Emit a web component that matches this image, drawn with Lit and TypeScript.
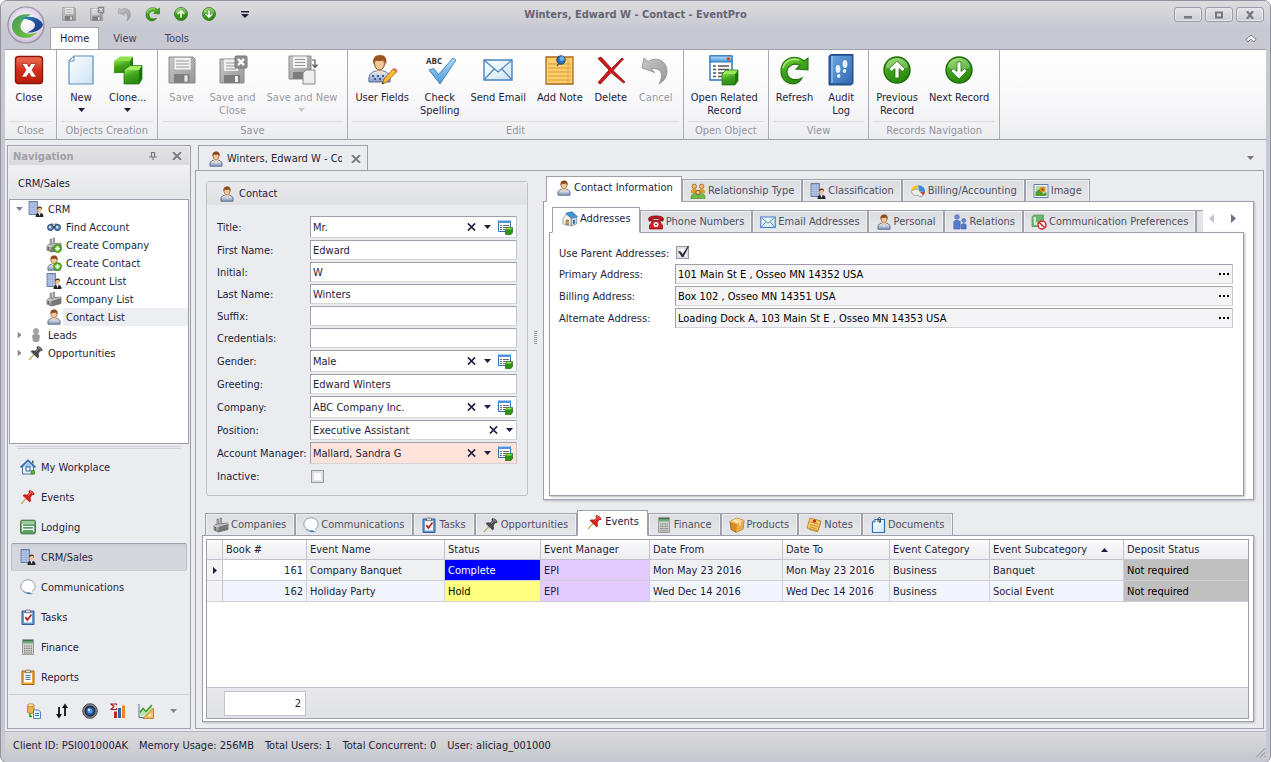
import { LitElement, html, svg, css, TemplateResult, SVGTemplateResult } from "lit";
import { customElement, state } from "lit/decorators.js";
import { classMap } from "lit/directives/class-map.js";

/* ---------- icon artwork ---------- */

const person = svg`
  <path d="M2 15.200c-.6-3.400.6-5.200 3.200-6L8 11l2.800-1.800c2.600.8 3.800 2.600 3.200 6z" fill="url(#shirt)" stroke="#566a86" stroke-width=".9"/>
  <path d="M5.600 9l2.400 4 2.400-4z" fill="#f8d8b0"/>
  <ellipse cx="8" cy="5.300" rx="2.800" ry="3.700" fill="#f3c699" stroke="#8a5428" stroke-width=".6"/>
  <path d="M4.500 6C3.800 2 5.600.4 8.200.4S12.300 2.200 11.500 6c-.4-1.500-.8-2.200-1.500-2.600-1.600.6-3 .6-4.300.2-.6.500-.8 1.200-1.200 2.400z" fill="#8b4a1d"/>`;

const plus = svg`
  <circle cx="11.500" cy="11.500" r="4" fill="#4fb51b" stroke="#2c7f0a" stroke-width=".6"/>
  <path d="M11.500 9v5M9 11.500h5" stroke="#fff" stroke-width="1.700"/>`;

const factory = svg`
  <path d="M1 8.500l3-1.500 11-1v6.500L5.500 15 1 13z" fill="url(#steel)" stroke="#5a5a5a" stroke-width=".7"/>
  <path d="M5.500 9v6l9.500-2.500V6z" fill="#777"/>
  <path d="M1 8.500L5.500 9.500 15 6.500" stroke="#ddd" fill="none" stroke-width=".8"/>
  <path d="M4 7V2h1.500v5M7 6.700V1h1.500v5.500" fill="#aaa" stroke="#666" stroke-width=".5"/>
  <path d="M2 10.500l1 .3M2 12l1 .3" stroke="#333" stroke-width=".9"/>`;

const building = svg`
  <path d="M1 .5h8.500v13H1z" fill="#8ea3cf" stroke="#51699d" stroke-width=".8"/>
  <path d="M3 1v12M5.200 1v12M7.400 1v12M1 3h8.500M1 5.200h8.500M1 7.400h8.500M1 9.600h8.500M1 11.800h8.500" stroke="#c3d0ec" stroke-width=".7"/>
  <path d="M7.500 16c0-3 1.400-4.200 4-4.200s4 1.200 4 4.200z" fill="#25252b"/>
  <path d="M10.300 11.800h2.400L11.500 15z" fill="#fff"/>
  <ellipse cx="11.500" cy="8.800" rx="2.100" ry="2.600" fill="#f3c28c"/>
  <path d="M9 9c-.3-2.600.7-3.500 2.600-3.500S14.400 6.500 14 9c-.5-1.500-1-1.900-1.900-1.900-.9 0-2.200 0-3.100 1.900z" fill="#5d3517"/>`;

const pin = (a: string, b: string) => svg`
  <path d="M1 15l5.200-5.600" stroke="#c9a45a" stroke-width="1.200"/>
  <path d="M3 6.500c1.600-1 3-.8 4-.2L9.500 4l-.6-2C10.500.8 14.500 3.500 14 5.500l-2.200.3L10 9c.8 1.500.7 2.700-.2 4z" fill="${a}" stroke="${b}" stroke-width=".7"/>
  <path d="M8.200 6.500L10.500 4.300M10 2.500c1.200.3 2.200 1.100 2.800 2.200" stroke="#fff" stroke-width=".8" opacity=".6" fill="none"/>`;

const disk = svg`
  <path d="M3 3h24l2 2v24H3z" fill="url(#grey)" stroke="#8a8a8a"/>
  <path d="M8 3.500h17V16H8z" fill="#f2f2f2" stroke="#a8a8a8" stroke-width=".8"/>
  <path d="M10 7h13M10 10h13M10 13h13" stroke="#999" stroke-width="1.200"/>
  <path d="M8 20h16v9H8z" fill="#8c8c8c"/><path d="M18 21h4v7h-4z" fill="#e8e8e8" stroke="#666" stroke-width=".6"/>
  <path d="M8 20h10v9H8z" fill="#777" opacity=".6"/>`;

const sheet = svg`
  <path d="M9 2h19v28H4V7z" fill="url(#paper)" stroke="#5a8fbd" stroke-width="1.200"/>
  <path d="M9 2v5H4z" fill="#fff" stroke="#5a8fbd"/>`;

const ball = (arrow: string) => svg`
  <circle cx="16" cy="16" r="13" fill="url(#green)" stroke="#1f6a08" stroke-width="1.400"/>
  <path d="M5 13C6 6 11 4 16 4s10 2 11 9c-5 4-17 4-22 0z" fill="#fff" opacity=".28"/>
  <path d="${arrow}" fill="#fff" stroke="#2a7a10" stroke-width=".8"/>`;

const cube = svg`
  <path d="M14 20l4-4h12l-3 4z" fill="#9be858"/><path d="M14 20h13v11H14z" fill="url(#green)"/>
  <path d="M27 20l3-4v11l-3 4z" fill="#1f7a0c"/><path d="M14 20l4-4h12v11l-3 4H14z" fill="none" stroke="#1e6a0c" stroke-width=".7"/>`;

const win = svg`
  <path d="M2 2h22v24H2z" fill="#fff" stroke="#3174b5" stroke-width="1.400"/>
  <path d="M2 2h22v6H2z" fill="url(#sky)" stroke="#3174b5"/>
  <path d="M19 3.500h3v3h-3z" fill="#e2401c"/>
  <path d="M5 12h3M10 12h11M5 15.500h3M10 15.500h11M5 19h3M10 19h11M5 22.500h3M10 22.500h5" stroke="#555" stroke-width="1.300"/>`;

const undo = svg`
  <path d="M2 14L4 4l4 3.500C17 2 27 7 27 17c0 6-3 10-8 13 4-7 4-15-5-15.500l-3 .5 4 3.500z" fill="url(#grey)" stroke="#8e8e8e" stroke-width=".8"/>`;

const redo = svg`
  <path d="M29 4v12l-12-1 4-3.500C15 8 8 12 8 18c0 6 7 10 15 6-2 4-6 6-10 6C6 29 2 24 2 17 2 8 10 1 20 4c2 .6 3.500 1.500 5 3z" fill="url(#green)" stroke="#23730b" stroke-width="1.100"/>
  <path d="M4 14C6 7 12 4 20 6" stroke="#c9f59a" stroke-width="1.500" fill="none" opacity=".8"/>`;

const clip = (frame: string, board: string) => svg`
  <path d="M2 2h12v13.500H2z" fill="${frame}" stroke="${board}" stroke-width="1"/>
  <path d="M4 4h8v9.500H4z" fill="#fff"/>
  <path d="M5.500 3.800V1.600l1.300-.6h2.400l1.300.6v2.200z" fill="#ddd" stroke="#555" stroke-width=".7"/>`;

const ICONS: Record<string, [number, SVGTemplateResult]> = {
  person: [16, person],
  personPlus: [16, svg`${person}${plus}`],
  factory: [16, factory],
  factoryPlus: [16, svg`${factory}${plus}`],
  building: [16, building],
  blackPin: [16, pin("#4a4d50", "#26282a")],
  redPin: [16, pin("#df2018", "#98100c")],
  binoculars: [16, svg`
    <path d="M4 6l1-1.500h2l1 2 1-2h2L12 6z" fill="#54708f"/>
    <circle cx="4.500" cy="8.500" r="2.800" fill="#6fa3d6" stroke="#35536f" stroke-width="1.200"/>
    <circle cx="11.500" cy="8.500" r="2.800" fill="#6fa3d6" stroke="#35536f" stroke-width="1.200"/>
    <path d="M7 8h2" stroke="#333" stroke-width="1.500"/>
    <circle cx="4" cy="8" r="1.100" fill="#e2f0ff"/><circle cx="11" cy="8" r="1.100" fill="#e2f0ff"/>`],
  lead: [16, svg`
    <circle cx="8" cy="4.200" r="2.700" fill="#a6a6a6" stroke="#8d8d8d" stroke-width=".6"/>
    <path d="M4.500 8.500C5.500 7 10.500 7 11.500 8.500L10.700 14c-.7 1-4.700 1-5.400 0z" fill="#9c9c9c" stroke="#888" stroke-width=".6"/>`],
  home: [16, svg`
    <path d="M2.500 7.500h11V15h-11z" fill="#e8f1fa" stroke="#35669c" stroke-width=".9"/>
    <path d="M2.800 8L8 3l5.200 5z" fill="#9cc5e8"/>
    <path d="M.5 8.500L8 1.300l7.500 7.200" fill="none" stroke="#2e6aa8" stroke-width="1.600"/>
    <path d="M12 1.500h1.500V5L12 3.700z" fill="#4a5a6a"/>
    <path d="M6 8h4v4H6z" fill="#fff" stroke="#2e5d96"/>
    <path d="M11 11.500h3.500V15H11z" fill="#5bb52a" stroke="#2c7a10" stroke-width=".6"/>`],
  bed: [16, svg`
    <rect x=".6" y="1.200" width="14.800" height="13.600" rx="1.500" fill="#5b9e63" stroke="#38753f"/>
    <path d="M1.500 2h13v3.500h-13z" fill="#9dcca0"/>
    <path d="M2.500 5v7.500M2.500 10.300h11M13.500 12.500V7.500H3" stroke="#fff" stroke-width="1.200" fill="none"/>`],
  balloon: [16, svg`
    <path d="M2 11.500c3 2.500 6 2.300 8 1.800 1 .9 2 1.300 3.500 1.500-4 1-9.500-.1-11.500-3.300z" fill="#3a86cc"/>
    <ellipse cx="8" cy="7.200" rx="7.200" ry="6.400" fill="#fff" stroke="#8794a2" stroke-width=".9"/>
    <path d="M9.500 12.500c.8 1.100 1.500 1.600 2.800 1.900l-.3-2.900z" fill="#fff"/>`],
  task: [16, svg`${clip("#6a9bd1", "#2f5f9c")}<path d="M5.300 8l2 3L11.500 5.500" fill="none" stroke="#c01c1c" stroke-width="1.700"/>`],
  calc: [16, svg`
    <path d="M2.500.5h11v15h-11z" fill="#d2d3cf" stroke="#9c9d99"/>
    <path d="M3 1.500h10v3H3z" fill="#6fae82"/><path d="M3 1h10v1.200H3z" fill="#3f6f4f"/>
    <path d="M4 7h8M4 9.300h8M4 11.600h8M4 13.900h8" stroke="#7c7c7c" stroke-width="1.200" stroke-dasharray="1.400 .8"/>`],
  report: [16, svg`${clip("#f0a62c", "#a8660e")}<path d="M5.500 6.500h5M5.500 8.500h5M5.500 10.500h5" stroke="#4f77a5" stroke-width="1"/>`],
  database: [16, svg`
    <path d="M1.500 2v7.500c1.500 1.200 5 1.200 6.500 0V2z" fill="#eeb04a" stroke="#b77a1c" stroke-width=".8"/>
    <ellipse cx="4.800" cy="2.200" rx="3.300" ry="1.500" fill="#ffe0a0" stroke="#b77a1c" stroke-width=".7"/>
    <path d="M4 10.500v3h2" fill="none" stroke="#2f9a1c" stroke-width="1.600"/>
    <path d="M7.500 7h5l2 2v6.500h-7z" fill="#eaf4ff" stroke="#3f78bd" stroke-width=".9"/><path d="M9 10.500h4M9 12.500h4" stroke="#3f78bd"/>`],
  swap: [16, svg`
    <path d="M5 4v8M11 13V4" stroke="#111" stroke-width="1.800"/>
    <path d="M2 11h6l-3 4.500zM8 5h6l-3-4.500z" fill="#111"/>`],
  camera: [16, svg`
    <circle cx="8" cy="8" r="7.300" fill="#7f8288" stroke="#4c4e52"/><circle cx="8" cy="8" r="4.800" fill="#1c4f9b" stroke="#27303e" stroke-width="1.400"/>
    <circle cx="8" cy="8" r="2.600" fill="#4f9aec"/><circle cx="7" cy="6.700" r="1.300" fill="#cfe6ff"/>`],
  sum: [16, svg`
    <path d="M6.500 2.200V1H1l3 2.500L1 6.500h5.500V5.200" fill="none" stroke="#b01818" stroke-width="1.100"/>
    <path d="M4 8.500h3V15H4z" fill="#c8281c"/><path d="M8 5h3v10H8z" fill="#2e68b4"/><path d="M12 2.500h3V15h-3z" fill="#f08a1c"/>`],
  chart: [16, svg`
    <path d="M1 1v13.500h14" fill="none" stroke="#4a7a9c"/><path d="M2 13V9l3-4 3 3 6-6v11z" fill="#bfe3a8"/>
    <path d="M2 9.500L5 5.500l3 3L14 2" fill="none" stroke="#3b982a" stroke-width="1.500"/>
    <path d="M15.500 5v10.500H5z" fill="#f2bd60" stroke="#b3761c" stroke-width=".8"/><path d="M13 10.500V13h-2.800z" fill="#fff"/>`],
  people: [16, svg`
    <path d="M.8 10c0-3 1-4 3.500-4s3.500 1 3.500 4zM8.200 10c0-3 1-4 3.500-4s3.500 1 3.500 4z" fill="#d8a020"/>
    <circle cx="4.300" cy="3.400" r="2.200" fill="#efbd88" stroke="#b06c28"/><circle cx="11.700" cy="3.400" r="2.200" fill="#efbd88" stroke="#b06c28"/>
    <path d="M.8 15.500c0-3.500 1.400-5 3.700-5s3.500 2 3.500 5zM8 15.500c0-3 1.400-5 3.700-5s3.500 1.500 3.500 5z" fill="#6cbf3c" stroke="#39801a" stroke-width=".5"/>
    <circle cx="8" cy="9.500" r="2.200" fill="#efbd88" stroke="#8b4a1d" stroke-width=".9"/>`],
  pie: [16, svg`
    <path d="M1 9C.5 5 4 2 8 2.200L7 7z" fill="#f7c81c"/><path d="M8 2.200c4.500 0 7.500 3 7 7L9 8z" fill="#3a8ae0"/>
    <path d="M15 9c-.3 1.600-.9 2.600-2 3.500L9 8.500z" fill="#d83c1c"/>
    <path d="M1.500 8.500c3-3 6-3 7.500-1l4 4.500c-1 2-3 2-4 1L7 12c-2 1-5 0-5.500-3.500z" fill="#ececec" stroke="#8f8f8f" stroke-width=".8"/>`],
  image: [16, svg`
    <path d="M1 1.500h14v13H1z" fill="#fff" stroke="#5c7cad"/><path d="M2.500 3h11v10h-11z" fill="#b4d9a0"/>
    <path d="M2.500 9l4-3 4 5 3-2v4h-11z" fill="#4f9c2c"/><circle cx="9.500" cy="6.500" r="2.700" fill="#e8891c"/><circle cx="9.500" cy="6.500" r="1" fill="#7a3a10"/>`],
  address: [16, svg`
    <path d="M1 7.500l3-4.500 5 3.500V15l-6.500-1.500L1 13z" fill="#f4f1e6" stroke="#7f8590" stroke-width=".7"/>
    <path d="M4 2.200L10 .7l5.500 5-5 1.500v1.300z" fill="#3f97da" stroke="#1c64a4" stroke-width=".7"/>
    <path d="M9.500 7.500l5-1.500v7L9.500 15z" fill="#cfd4da" stroke="#7f8590" stroke-width=".7"/>
    <path d="M4 9h2.300v5L4 13.500z" fill="#e9a81c" stroke="#444" stroke-width=".5"/><path d="M11 9h2v3.500l-2 .6z" fill="#3a6ea4"/>`],
  phone: [16, svg`
    <path d="M.5 4.500C1 1 15 1 15.500 4.500L15 7h-3.500L11 4.800H5L4.500 7H1z" fill="#b8141c" stroke="#75080e" stroke-width=".7"/>
    <path d="M5 6.500h6l3.500 5V15h-13v-3.500z" fill="#d01c24" stroke="#75080e" stroke-width=".7"/>
    <circle cx="8" cy="10.500" r="2.500" fill="#fff"/><circle cx="8" cy="10.500" r="1" fill="#b8141c"/>`],
  envelope: [16, svg`
    <path d="M.8 3h14.400v10.500H.8z" fill="url(#paper)" stroke="#3f7cc0" stroke-width="1.100"/>
    <path d="M1 3.200l7 6 7-6M1 13.300l5-5.400M15 13.300l-5-5.400" fill="none" stroke="#4d88c6" stroke-width=".9"/>`],
  relations: [16, svg`
    <circle cx="5" cy="3" r="2.300" fill="#6a8cd8" stroke="#3c5cb0" stroke-width=".6"/><path d="M1.800 15V7.500c1-1.500 5.400-1.500 6.400 0V15z" fill="#5378cc" stroke="#3c5cb0" stroke-width=".6"/>
    <circle cx="11.700" cy="6.500" r="2" fill="#6a8cd8" stroke="#3c5cb0" stroke-width=".6"/><path d="M9.300 15v-4.500c.8-1 4-1 4.800 0V15z" fill="#5378cc" stroke="#3c5cb0" stroke-width=".6"/>`],
  prefs: [16, svg`
    <path d="M1 2.500L3 1h9.500v9l-2 2.500H1z" fill="#6cb870" stroke="#4a8d50" stroke-width=".7"/><path d="M2.500 3.500c1-1 3-.5 2.500 1.500L4.500 7l3 4H3z" fill="#d9f0d9"/>
    <circle cx="11" cy="11" r="4" fill="#fff" stroke="#de1c28" stroke-width="1.500"/><path d="M8.300 8.500l5.300 5" stroke="#de1c28" stroke-width="1.500"/>`],
  box: [16, svg`
    <path d="M1 4.500L8 1l7 2.500-1 8.500-7 3.500-5-3z" fill="#d98a24" stroke="#8a500c" stroke-width=".7"/>
    <path d="M1 4.500L8 1l7 2.500L8 7z" fill="#fbd184"/><path d="M8 7l7-3.500-1 8.500-7 3.500z" fill="#ecaa48"/>
    <path d="M4.500 3l6.500 2.600v3" stroke="#fff3cf" fill="none" stroke-width="1.200"/>`],
  notes: [16, svg`
    <path d="M4 1l11 3-3 10L1 11z" fill="#f7c766" stroke="#b07a24" stroke-width=".8"/>
    <path d="M3 12.300l8.500 2.500L14.500 6" fill="none" stroke="#c8923c"/><path d="M4.500 5l8 2.200M4 7.500l8 2.200M3.500 9.700l7 2" stroke="#b98838" stroke-width=".8"/>
    <circle cx="8.500" cy="4" r="1.600" fill="#c0201c"/>`],
  documents: [16, svg`
    <path d="M5 2.500h9.500v13h-12V5z" fill="url(#paper)" stroke="#2f73b5" stroke-width="1.200"/><path d="M2.500 5H5V2.500" fill="#fff" stroke="#2f73b5"/>
    <path d="M8 5V1.500c0-1.300 2.500-1.300 2.500 0V5c0 .9-1.200.9-1.200 0V2.500" fill="none" stroke="#38424e" stroke-width=".9"/>`],
  record: [16, svg`
    <path d="M1.500 1.500h12v11h-12z" fill="#fff" stroke="#2f6fb5"/><path d="M1 1h13v3H1z" fill="#4d96dc"/><path d="M1.500 1.500h12" stroke="#9fd0f6"/>
    <path d="M3 6.500h2M6 6.500h6M3 8.500h2M6 8.500h6M3 10.500h2M6 10.500h2" stroke="#6a6a72"/>
    <path d="M8.500 10.500l1.500-2h5.500v5L14 15.500H8.500z" fill="#2f9414" stroke="#1e6a0c" stroke-width=".7"/><path d="M8.700 10.500l1.500-1.700h5L14 10.500z" fill="#8fe04a"/>`],
  closeBox: [32, svg`
    <rect x="2.500" y="2.500" width="27" height="27" rx="3" fill="url(#red)" stroke="#8f1408" stroke-width="1.400"/>
    <path d="M9 9.500h5l2 3.500 2-3.500h5L19 16l4.500 7h-5L16 19l-2.500 4h-5L13 16z" fill="#fff" stroke="#a82414" stroke-width=".7"/>`],
  sheet: [32, sheet],
  clone: [32, svg`
    <path d="M2 7l6-4.500h13l-3 4.500z" fill="#8fe04a"/><path d="M2 7h16v12H2z" fill="url(#green)"/><path d="M18 7l3-4.500v11L18 19z" fill="#207c0e"/>
    <path d="M12 16l6-4.500h12L27 16z" fill="#a2ee60"/><path d="M12 16h15v14H12z" fill="url(#green)"/><path d="M27 16l3-4.500V25l-3 5z" fill="#1b730b"/>
    <path d="M12 16l6-4.500h12V25l-3 5H12z" fill="none" stroke="#1b6a0c" stroke-width=".7"/>`],
  disk: [32, disk],
  diskClose: [32, svg`
    <path d="M3 5h24v24H3z" fill="url(#grey)" stroke="#8a8a8a"/><path d="M7 5.500h14V17H7z" fill="#f0f0f0"/><path d="M9 9h10M9 12h10M9 15h10" stroke="#999"/>
    <path d="M7 21h16v8H7z" fill="#7c7c7c"/><path d="M18 22h3v6h-3z" fill="#eee"/>
    <rect x="18" y="2" width="12" height="12" rx="1" fill="#909090" stroke="#777"/><path d="M21 5l6 6M27 5l-6 6" stroke="#fff" stroke-width="2.400"/>`],
  diskNew: [32, svg`
    <path d="M3 2h22v23H3z" fill="url(#grey)" stroke="#8a8a8a"/><path d="M7 2.500h14V14H7z" fill="#f0f0f0"/><path d="M9 5.500h10M9 8.500h10M9 11.500h10" stroke="#999"/>
    <path d="M7 18h11v7H7z" fill="#7c7c7c"/><path d="M20 16h9v14H17V19z" fill="#eee" stroke="#888"/>
    <path d="M26 6h3v7M26.500 10.500l2.500 3 2.500-3" stroke="#555" fill="none" stroke-width="1.200"/>`],
  userFields: [32, svg`
    <path d="M3 28c-1-7 2-10 7-11h7c5 1 8 4 7 11z" fill="url(#shirt)" stroke="#5f7088"/>
    <path d="M6 22h2M11 22h2M16 22h2M8 25h2M13 25h2M18 25h2" stroke="#365d9c" stroke-width="2.200"/>
    <path d="M10 17l3.500 4 3.500-4z" fill="#f8d8b0"/>
    <ellipse cx="13.500" cy="9.500" rx="5" ry="6.500" fill="#f3c699" stroke="#8a5428"/>
    <path d="M7.500 11C6 4 9 1 14 1s7.500 3 6 10c-.6-2-1.200-3.600-2.500-4.500-2.500.8-5.500.7-8 .2-1 1-1.500 2.600-2 4.300z" fill="#9a541f"/>
    <path d="M16 30l2-5L27 15l3.500 3L20 28.500z" fill="#f9b934" stroke="#a55f12" stroke-width=".8"/><path d="M27 15l1.500-1.200 3.500 3-1.500 1.200z" fill="#e0715c"/><path d="M16 30l.8-2 1.200 1.200z" fill="#111"/>`],
  spell: [32, svg`
    <path d="M5 16l5-1.500 4.500 6L29 4l3 2-16 24z" fill="url(#sky)" stroke="#3d7fb5" stroke-width=".9"/>
    <text x="2" y="10" font-family="Open Sans, sans-serif" font-weight="700" font-size="8" fill="#333">ABC</text>`],
  mail: [32, svg`
    <path d="M2 6h28v20H2z" fill="url(#paper)" stroke="#4685bf" stroke-width="1.400"/>
    <path d="M2 6l14 12L30 6M2 26l10-11M30 26L20 15" fill="none" stroke="#4a86bd" stroke-width="1.200"/>`],
  note: [32, svg`
    <path d="M2 3h27v27H2z" fill="#fbce6e" stroke="#a8691c" stroke-width="1.300"/><path d="M4 10h23M4 14h23M4 18h23M4 22h23M4 26h23" stroke="#d99a34" stroke-width="1"/>
    <path d="M24 4v25" stroke="#e3ac50"/>
    <path d="M13 12l2.500-3" stroke="#555" stroke-width="1.300"/>
    <circle cx="17" cy="6" r="4.200" fill="#2f6fae" stroke="#1b4878"/><circle cx="18" cy="4.700" r="2.400" fill="#6fb0e6"/>`],
  cross: [32, svg`<path d="M3 4.500L6 3l10.500 11.500L27 4l1.500 1L18 16.500 30 28l-1.500 1L16 18.500 5.500 30l-2.500-1.500 11-12.500z" fill="#cf1a1a" stroke="#8c0c0c" stroke-width=".8"/>`],
  undo: [32, undo],
  redo: [32, redo],
  related: [32, svg`${win}${cube}`],
  audit: [32, svg`
    <path d="M4 2l2-1.500h22v29L26 31H4z" fill="#2c5f9e" stroke="#1f4a80"/><path d="M6 2h21v27H6z" fill="url(#book)"/><path d="M7 2v27" stroke="#a8cef2"/>
    <ellipse cx="13" cy="15" rx="2.400" ry="4" fill="#e4f1ff"/><ellipse cx="13.700" cy="22" rx="1.700" ry="2" fill="#e4f1ff"/>
    <ellipse cx="20" cy="10" rx="2.400" ry="4" fill="#e4f1ff"/><ellipse cx="19.500" cy="17" rx="1.700" ry="2" fill="#e4f1ff"/>`],
  up: [32, ball("M16 7l8 8-2.500 2.500-3.500-3V24h-4v-9.500l-3.500 3L8 15z")],
  down: [32, ball("M16 25l8-8-2.500-2.500-3.500 3V8h-4v9.500l-3.500-3L8 17z")],
};

const icon = (name: string, size = 16) => {
  const [box, art] = ICONS[name];
  return html`<svg class=${size === 32 ? "i32" : "i16"} viewBox="0 0 ${box} ${box}" aria-hidden="true">${art}</svg>`;
};

const caret = html`<svg class="caret" viewBox="0 0 7 4" aria-hidden="true"><path d="M0 0h7L3.500 4z" fill="currentColor"/></svg>`;
const cross = html`<svg class="cross" viewBox="0 0 10 8" aria-hidden="true"><path d="M1 0l8 8M9 0L1 8" stroke="currentColor" stroke-width="1.800"/></svg>`;

/* ---------- data ---------- */

type RibbonItem = { icon: string; text: string[]; off?: boolean; menu?: boolean };

const RIBBON: { name: string; items: RibbonItem[] }[] = [
  { name: "Close", items: [{ icon: "closeBox", text: ["Close"] }] },
  { name: "Objects Creation", items: [
    { icon: "sheet", text: ["New"], menu: true },
    { icon: "clone", text: ["Clone..."], menu: true } ] },
  { name: "Save", items: [
    { icon: "disk", text: ["Save"], off: true },
    { icon: "diskClose", text: ["Save and", "Close"], off: true },
    { icon: "diskNew", text: ["Save and New"], off: true, menu: true } ] },
  { name: "Edit", items: [
    { icon: "userFields", text: ["User Fields"] },
    { icon: "spell", text: ["Check", "Spelling"] },
    { icon: "mail", text: ["Send Email"] },
    { icon: "note", text: ["Add Note"] },
    { icon: "cross", text: ["Delete"] },
    { icon: "undo", text: ["Cancel"], off: true } ] },
  { name: "Open Object", items: [{ icon: "related", text: ["Open Related", "Record"] }] },
  { name: "View", items: [
    { icon: "redo", text: ["Refresh"] },
    { icon: "audit", text: ["Audit", "Log"] } ] },
  { name: "Records Navigation", items: [
    { icon: "up", text: ["Previous", "Record"] },
    { icon: "down", text: ["Next Record"] } ] },
];

const TREE = [
  { level: 1, icon: "building", text: "CRM", mark: "open" },
  { level: 2, icon: "binoculars", text: "Find Account" },
  { level: 2, icon: "factoryPlus", text: "Create Company" },
  { level: 2, icon: "personPlus", text: "Create Contact" },
  { level: 2, icon: "building", text: "Account List" },
  { level: 2, icon: "factory", text: "Company List" },
  { level: 2, icon: "person", text: "Contact List" },
  { level: 1, icon: "lead", text: "Leads", mark: "shut" },
  { level: 1, icon: "blackPin", text: "Opportunities", mark: "shut" },
];

const MODULES: [string, string][] = [
  ["home", "My Workplace"], ["redPin", "Events"], ["bed", "Lodging"], ["building", "CRM/Sales"],
  ["balloon", "Communications"], ["task", "Tasks"], ["calc", "Finance"], ["report", "Reports"],
];

const TOOLS: [string, string][] = [
  ["database", "Data"], ["swap", "Transfer"], ["camera", "View"], ["sum", "Totals"], ["chart", "Charts"],
];

type Kind = "text" | "combo" | "lookup" | "required";
const FIELDS: [string, string, Kind][] = [
  ["Title:", "Mr.", "lookup"],
  ["First Name:", "Edward", "text"],
  ["Initial:", "W", "text"],
  ["Last Name:", "Winters", "text"],
  ["Suffix:", "", "text"],
  ["Credentials:", "", "text"],
  ["Gender:", "Male", "lookup"],
  ["Greeting:", "Edward Winters", "text"],
  ["Company:", "ABC Company Inc.", "lookup"],
  ["Position:", "Executive Assistant", "combo"],
  ["Account Manager:", "Mallard, Sandra G", "required"],
];

const INFO_TABS: [string, string][] = [
  ["person", "Contact Information"], ["people", "Relationship Type"], ["building", "Classification"],
  ["pie", "Billing/Accounting"], ["image", "Image"],
];
const SUB_TABS: [string, string][] = [
  ["address", "Addresses"], ["phone", "Phone Numbers"], ["envelope", "Email Addresses"],
  ["person", "Personal"], ["relations", "Relations"], ["prefs", "Communication Preferences"],
];
const LINK_TABS: [string, string][] = [
  ["factory", "Companies"], ["balloon", "Communications"], ["task", "Tasks"], ["blackPin", "Opportunities"],
  ["redPin", "Events"], ["calc", "Finance"], ["box", "Products"], ["notes", "Notes"], ["documents", "Documents"],
];
const ADDRESSES: [string, string][] = [
  ["Primary Address:", "101 Main St E , Osseo MN 14352 USA"],
  ["Billing Address:", "Box 102 , Osseo MN 14351 USA"],
  ["Alternate Address:", "Loading Dock A, 103 Main St E , Osseo MN 14353 USA"],
];
const COLUMNS = ["Book #", "Event Name", "Status", "Event Manager", "Date From", "Date To", "Event Category", "Event Subcategory", "Deposit Status"];
const ROWS = [
  ["161", "Company Banquet", "Complete", "EPI", "Mon May 23 2016", "Mon May 23 2016", "Business", "Banquet", "Not required"],
  ["162", "Holiday Party", "Hold", "EPI", "Wed Dec 14 2016", "Wed Dec 14 2016", "Business", "Social Event", "Not required"],
];
const STATUS = ["Client ID: PSI001000AK", "Memory Usage: 256MB", "Total Users: 1", "Total Concurrent: 0", "User: aliciag_001000"];

/* ---------- application window ---------- */

@customElement("app-root")
export class AppRoot extends LitElement {
  @state() private ribbonTab = 0;
  @state() private module = "CRM/Sales";
  @state() private infoTab = 0;
  @state() private subTab = 0;
  @state() private linkTab = 4;

  static styles = css`
    :host {
      display: flex;
      flex-direction: column;
      box-sizing: border-box;
      min-height: 100vh;
      padding: 0 4px 4px;
      border: 1px solid #93939f;
      border-radius: 7px;
      background: #c8c8d1;
      color: #1e1e3c;
      font: 11px/13px "DejaVu Sans Condensed", "DejaVu Sans", sans-serif;
    }
    *, *::before { box-sizing: border-box; }
    button, input, select { font: inherit; color: inherit; margin: 0; }
    button { border: 0; padding: 0; background: none; white-space: nowrap; }
    ul { list-style: none; margin: 0; padding: 0; }
    svg { display: block; flex: none; }
    .defs { position: absolute; width: 0; height: 0; }
    .i16 { width: 16px; height: 16px; }
    .i32 { width: 32px; height: 32px; }
    .caret { width: 7px; height: 4px; }
    .cross { width: 10px; height: 8px; }
    .grow { flex: 1; min-width: 0; }

    /* title bar */
    .head {
      display: grid;
      grid-template: 26px 22px / 45px minmax(0, 1fr);
      margin: 0 -4px;
      padding: 0 4px;
      border-radius: 6px 6px 0 0;
      background: linear-gradient(#dcdce0, #c8c8d1 28px);
    }
    .logo { grid-area: 1 / 1 / 3 / 2; z-index: 1; width: 40px; height: 44px; padding: 2px 0 0 1px; }
    .logo svg { width: 40px; height: 40px; }
    .bar { grid-area: 1 / 1 / 2 / 3; display: grid; grid-template-columns: 1fr auto 1fr; align-items: center; }
    .quick { display: flex; align-items: center; gap: 12px; padding-left: 56px; }
    .quick .more { margin-left: 12px; }
    .quick .more svg { width: 8px; height: 7px; }
    .title { font-size: 11px; font-weight: 700; color: #666674; margin: 0; white-space: nowrap; }
    .frame { display: flex; gap: 3px; justify-content: flex-end; padding: 1px 2px 0 0; }
    .frame button {
      display: grid; place-items: center; width: 28px; height: 15px;
      border: 1px solid #9c9ca8; border-radius: 3px;
      background: linear-gradient(#e4e4e8, #cdcdd5); color: #777784;
      box-shadow: inset 0 0 0 1px #e6e6ea;
    }
    .frame svg { width: 10px; height: 8px; }
    .tabs0 { grid-area: 2 / 2; display: flex; align-items: stretch; }
    .tabs0 button { height: 22px; padding: 0 14px; color: #44445c; }
    .tabs0 .on { color: #1e1e3c; background: #fff; padding: 0 9px; border: 1px solid #a4a4b0; border-bottom: 0; border-radius: 2px 2px 0 0; }
    .tabs0 .fold { margin-left: auto; padding: 0 9px 0 0; }
    .fold svg { width: 12px; height: 9px; }

    /* ribbon */
    .ribbon {
      display: flex;
      border: 1px solid #a0a0ac; border-width: 1px 0;
      background: linear-gradient(#fff, #f6f6f8 60px, #ecedf0);
    }
    .group { display: flex; flex-direction: column; min-width: 51px; border-right: 1px solid #acacb6; }
    .items { display: flex; gap: 3px; height: 71px; padding: 4px 6px 0 3px; }
    .items button { display: flex; flex-direction: column; align-items: center; min-width: 42px; padding: 0 4px; }
    .items button span { display: block; }
    .items .label { margin-top: 5px; }
    .items .caret { margin-top: 4px; }
    .items button:disabled { color: #9a9aa6; }
    .items button:disabled .caret { color: #c6c6ce; }
    .caption { border-top: 1px solid #dcdde1; margin: 0 4px; padding: 2px 0; color: #94949f; text-align: center; white-space: nowrap; }

    /* work area */
    .work {
      flex: 1; display: flex; gap: 4px; min-height: 0;
      padding: 5px 2px 2px 2px; background: #ebecf0;
    }
    .nav { display: flex; flex-direction: column; width: 184px; flex: none; border: 1px solid #a0a0ac; padding: 1px; }
    .navhead { display: flex; align-items: center; gap: 15px; height: 18px; padding: 0 7px 0 4px; background: linear-gradient(#e2e2e6, #d9dadd); color: #777784; }
    .navhead h2 { font: inherit; font-weight: 700; color: #a0a0aa; margin: 0; flex: 1; }
    .pin { width: 8px; height: 8px; }
    .section { padding: 12px 9px 9px; background: linear-gradient(#f0f0f3, #e4e5e9); }
    .tree { flex: 1; border: 1px solid #a0a0ac; background: #fff; }
    .tree li { display: flex; align-items: center; height: 18px; }
    .tree .mark { width: 18px; display: grid; place-items: center; color: #84848f; flex: none; }
    .tree li.l2 { padding-left: 18px; }
    .tree .shut .caret { transform: rotate(-90deg); }
    .tree button { flex: 1; text-align: left; height: 18px; padding: 0 3px; margin-left: 1px; }
    .tree .sel button { background: #edeef1; }
    .split { height: 5px; border-bottom: 1px solid #cfd0d6; margin: 0 8px 3px; background: linear-gradient(#0000 2px, #cfd0d6 2px 3px, #0000 3px); }
    .modules { padding: 0 2px; }
    .modules button {
      display: flex; align-items: center; gap: 5px; width: 100%; height: 30px; padding: 0 8px;
      border: 1px solid transparent; border-radius: 2px;
    }
    .modules .on { height: 28px; margin: 1px 0; border-color: #a0a0ac #bcbcc6 #d0d0d8; background: linear-gradient(#cfd0d6, #d6d7dc 4px); }
    .tools { display: flex; align-items: center; gap: 12px; height: 33px; margin-top: 2px; padding: 0 12px 0 17px; border-top: 1px solid #cfd0d6; }
    .tools .caret { color: #84848f; }
    .tools .last { margin-left: 4px; }

    .doc { flex: 1; min-width: 0; display: flex; flex-direction: column; }
    .docbar { display: flex; align-items: center; padding: 0 10px 0 3px; color: #777784; }
    .doctab {
      display: flex; align-items: center; gap: 3px; width: 170px; height: 26px; padding: 0 6px 0 9px;
      border: 1px solid #a0a0ac; border-bottom: 0; margin-bottom: -1px; background: #ebecf0; color: #777784;
    }
    .doctab .name { flex: 1; min-width: 0; overflow: hidden; white-space: nowrap; color: #1e1e3c; margin-right: 6px; }
    .docbar .caret { margin-left: auto; }
    .sheet { flex: 1; display: flex; flex-direction: column; gap: 10px; border: 1px solid #a0a0ac; padding: 5px 9px 6px 6px; }

    .top { flex: 1; display: flex; gap: 15px; padding-left: 4px; }
    .card { flex: none; width: 322px; margin: 5px 0 4px; border: 1px solid #bfc0c9; border-radius: 3px; align-self: flex-start; min-height: 315px; }
    .card h3 { display: flex; align-items: center; gap: 4px; height: 24px; margin: 0; padding: 0 12px; font: inherit; background: linear-gradient(#e9e9ed, #dfe0e4); border-bottom: 1px solid #ededf0; }
    .form { display: grid; grid-template-columns: 93px 1fr; gap: 2px 0; align-items: center; padding: 10px 10px 0; }
    .form .check { margin: 4px 1px; }
    .box { display: grid; grid-template-columns: 1fr 18px 14px; align-items: center; height: 20px; border: 1px solid #a0a0ac; border-right-color: #c4c5cd; border-bottom-color: #d4d5db; background: #fff; }
    .box.tall { grid-template-columns: 1fr 18px 14px 22px; height: 22px; }
    .box.req { background: #ffe2da; }
    .box > * { grid-row: 1; }
    .box input, .box select { grid-column: 1 / -1; width: 100%; min-width: 0; height: 18px; padding: 0 2px; border: 0; background: none; appearance: none; outline: none; }
    .box .clear { grid-column: 2; z-index: 1; display: grid; place-items: center; }
    .box .clear svg { width: 9px; }
    .box .arrow { grid-column: 3; display: grid; place-items: center; pointer-events: none; }
    .box .open { grid-column: 4; z-index: 1; display: grid; place-items: center; }
    .check { position: relative; appearance: none; width: 13px; height: 13px; margin: 0; border: 1px solid #9a9aa6; background: #fff; box-shadow: inset 0 0 0 2px #dfe0e6; }
    .check:checked::before {
      content: ""; position: absolute; left: 1px; top: -1px; width: 11px; height: 11px; background: #2a2a40;
      clip-path: polygon(0 50%, 20% 45%, 42% 72%, 90% 0, 100% 0, 50% 100%, 35% 100%);
    }
    .grip { align-self: center; width: 3px; height: 14px; margin-right: -9px; margin-left: -9px; background: repeating-linear-gradient(#9c9ca8 0 1px, transparent 1px 2px); }

    /* tab strips */
    .tabset { display: flex; flex-direction: column; min-width: 0; }
    .strip { display: flex; align-items: flex-end; padding: 0 3px; margin-bottom: -1px; position: relative; min-width: 0; }
    .strip button {
      display: flex; align-items: center; gap: 2px; height: 23px; padding: 0 7px; flex: none;
      border: 1px solid #a0a0ac; background: linear-gradient(#dcdde1, #e6e7eb); color: #505064;
      box-shadow: inset 1px 1px 0 #f0f0f3, inset -1px 0 0 #f0f0f3;
    }
    .links .strip button { padding-right: 8px; }
    .strip button.on { height: 26px; padding: 0 8px 3px 9px; background: #fff; color: #1e1e3c; border-bottom-color: #fff; box-shadow: none; }
    .pane { flex: 1; display: flex; flex-direction: column; border: 1px solid #a0a0ac; background: #fff; box-shadow: 1px 1px 2px #b8b8c2; }
    .strip .stub { width: 7px; height: 23px; border: 1px solid #a0a0ac; border-right: 0; background: #e2e3e7; }
    .scroll { display: flex; gap: 17px; margin: 0 5px 10px; color: #707080; }
    .scroll svg { width: 5px; height: 9px; }
    .scroll svg:first-child { color: #c4c4cc; }
    .info { flex: 1; }
    .info > .pane { padding: 5px 9px 3px 5px; }
    .info .tabset { flex: 1; }
    .addr { display: grid; grid-template-columns: 116px 1fr; gap: 2px 0; align-items: center; padding: 11px 10px 0 9px; }
    .addr .check { margin: 2px 0 3px 1px; }
    .addr .box { grid-template-columns: 1fr 16px; background: #f4f4f7; color: #000; }
    .addr .dots { grid-column: 2; z-index: 1; display: grid; place-items: center; }
    .dots svg { width: 10px; height: 2px; }

    /* events grid */
    .links > .pane { padding: 3px 4px 2px 3px; }
    .grid { display: flex; flex-direction: column; height: 180px; border: 1px solid #a0a0ac; background: #fff; }
    table { width: 100%; border-collapse: separate; border-spacing: 0; table-layout: fixed; }
    col.c0 { width: 16px; } col.c1 { width: 84px; } col.c2 { width: 138px; } col.c3 { width: 96px; }
    col.c4 { width: 109px; } col.c5 { width: 133px; } col.c6 { width: 107px; } col.c7 { width: 100px; } col.c8 { width: 134px; }
    th, td { height: 21px; padding: 0 3px; text-align: left; font-weight: 400; border-right: 1px solid #d0d1d8; border-bottom: 1px solid #d0d1d8; white-space: nowrap; overflow: hidden; }
    th { height: 20px; background: linear-gradient(#fbfbfc, #ededf0); border-color: #c2c3cc; }
    th:last-child, td:last-child { border-right: 0; }
    th .sort { display: flex; align-items: center; justify-content: space-between; padding-right: 12px; }
    th .caret { transform: rotate(180deg); }
    td { background: #f1f4fa; }
    .cur td { background: #eff0f2; }
    td.num { text-align: right; }
    .cur td.num { background: #fff; }
    td.head0, .cur td.head0 { background: #f3f3f5; border-right-color: #c2c3cc; }
    .head0 svg { width: 4px; height: 7px; margin-left: 3px; }
    td.Complete, .cur td.Complete { background: #0000fe; color: #fff; }
    td.Hold { background: #ffff80; color: #000; }
    .cur td.mgr, td.mgr { background: #e3caff; }
    .cur td.dep, td.dep { background: #c0c0c0; color: #000; }
    .foot { margin-top: auto; height: 31px; border-top: 1px solid #c2c3cc; background: linear-gradient(#e9e9ed, #e1e2e6); padding: 3px 0 0 17px; }
    .foot output { display: block; width: 82px; height: 25px; padding: 5px 4px; text-align: right; background: #fff; border: 1px solid #c2c3cc; }

    /* status bar */
    .status { display: flex; gap: 11px; align-items: center; height: 27px; padding: 0 0 0 8px; border-top: 1px solid #b4b4be; background: linear-gradient(#dadade, #c8c9ce); white-space: nowrap; }
    .status svg { margin-left: auto; align-self: flex-end; width: 11px; height: 11px; }
  `;

  private strip(tabs: [string, string][], active: number, pick: (i: number) => void, tail?: TemplateResult) {
    return html`<div class="strip" role="tablist">
      ${tabs.map(([art, text], i) => html`<button role="tab" aria-selected=${i === active} class=${classMap({ on: i === active })} @click=${() => pick(i)}>${icon(art)}<span>${text}</span></button>`)}
      ${tail ?? ""}
    </div>`;
  }

  private field([label, value, kind]: [string, string, Kind], i: number) {
    const id = `f${i}`;
    const tall = kind === "lookup" || kind === "required";
    return html`<label for=${id}>${label}</label>
      <div class=${classMap({ box: true, tall, req: kind === "required" })}>
        ${kind === "text"
          ? html`<input id=${id} type="text" .value=${value}>`
          : html`<select id=${id}><option selected>${value}</option></select>
              <button class="clear" aria-label="Clear">${cross}</button>
              <span class="arrow">${caret}</span>
              ${tall ? html`<button class="open" aria-label="Open record">${icon("record")}</button>` : ""}`}
      </div>`;
  }

  private cell(value: string, c: number) {
    const name = ["num", "", value, "mgr", "", "", "", "", "dep"][c];
    return html`<td class=${name}>${value}</td>`;
  }

  render() {
    return html`
      <svg class="defs" aria-hidden="true"><defs>
        <linearGradient id="green" x1="0" y1="0" x2=".4" y2="1"><stop offset="0" stop-color="#8edc4a"/><stop offset=".5" stop-color="#3fa51c"/><stop offset="1" stop-color="#2c8a10"/></linearGradient>
        <linearGradient id="red" x1="0" y1="0" x2="0" y2="1"><stop offset="0" stop-color="#f0725c"/><stop offset=".5" stop-color="#d42e1a"/><stop offset="1" stop-color="#b81c0c"/></linearGradient>
        <linearGradient id="grey" x1="0" y1="0" x2="1" y2="1"><stop offset="0" stop-color="#c8c8c8"/><stop offset="1" stop-color="#979797"/></linearGradient>
        <linearGradient id="paper" x1="0" y1="0" x2="1" y2="1"><stop offset="0" stop-color="#fff"/><stop offset="1" stop-color="#cbe2f6"/></linearGradient>
        <linearGradient id="sky" x1="0" y1="0" x2="0" y2="1"><stop offset="0" stop-color="#b5dcf8"/><stop offset="1" stop-color="#4a97d8"/></linearGradient>
        <linearGradient id="book" x1="0" y1="0" x2="1" y2="1"><stop offset="0" stop-color="#6aa6e2"/><stop offset="1" stop-color="#3468b0"/></linearGradient>
        <linearGradient id="shirt" x1="0" y1="0" x2="0" y2="1"><stop offset="0" stop-color="#eef3fa"/><stop offset="1" stop-color="#7f98be"/></linearGradient>
        <linearGradient id="steel" x1="0" y1="0" x2="0" y2="1"><stop offset="0" stop-color="#cfcfcf"/><stop offset="1" stop-color="#8c8c8c"/></linearGradient>
        <linearGradient id="leaf" x1="0" y1="0" x2="1" y2="1"><stop offset="0" stop-color="#3f9a58"/><stop offset="1" stop-color="#7cc83c"/></linearGradient>
        <linearGradient id="wave" x1="0" y1="0" x2="1" y2="1"><stop offset="0" stop-color="#2c9ac8"/><stop offset=".5" stop-color="#1c4f9c"/><stop offset="1" stop-color="#1a3f88"/></linearGradient>
        <radialGradient id="orb" cx=".5" cy=".45" r=".55"><stop offset="0" stop-color="#fff"/><stop offset=".7" stop-color="#e6daee"/><stop offset="1" stop-color="#cdb6da"/></radialGradient>
      </defs></svg>

      <header class="head">
        <button class="logo" aria-label="Application menu">
          <svg viewBox="0 0 40 40">
            <circle cx="20" cy="21" r="18" fill="url(#orb)" stroke="#94949f" stroke-width="1.200"/>
            <path d="M25 10.500C13 8.500 5 15 6 23.500c1 7 8 11 14 10.500 5-.4 9-2.500 11-6-6 3-12 2-15-1.500-3.500-4.500-1-11 9-16z" fill="url(#leaf)"/>
            <path d="M14 14.500c10-4 20-1 23 6-1 5-8 8.500-16 8 5-2 8-4.500 8-7.500 0-3.500-6-6.300-15-6.500z" fill="url(#wave)"/>
          </svg>
        </button>
        <div class="bar">
          <div class="quick">
            <button aria-label="Save">${icon("disk")}</button>
            <button aria-label="Save and Close">${icon("diskClose")}</button>
            <button aria-label="Undo">${icon("undo")}</button>
            <button aria-label="Refresh">${icon("redo")}</button>
            <button aria-label="Previous Record">${icon("up")}</button>
            <button aria-label="Next Record">${icon("down")}</button>
            <button class="more" aria-label="Customize toolbar"><svg viewBox="0 0 8 7"><path d="M0 0h8v1.500H0zM0 3h8L4 7z" fill="currentColor"/></svg></button>
          </div>
          <h1 class="title">Winters, Edward W - Contact - EventPro</h1>
          <div class="frame">
            <button aria-label="Minimize"><svg viewBox="0 0 10 8"><path d="M1 5h8v2.500H1z" fill="currentColor"/></svg></button>
            <button aria-label="Maximize"><svg viewBox="0 0 10 8"><path d="M2 1.500h6v5H2z" fill="none" stroke="currentColor" stroke-width="2"/></svg></button>
            <button aria-label="Close window"><svg viewBox="0 0 10 8"><path d="M2 0l6 8M8 0L2 8" stroke="currentColor" stroke-width="2.200"/></svg></button>
          </div>
        </div>
        <nav class="tabs0">
          ${["Home", "View", "Tools"].map((t, i) => html`<button class=${classMap({ on: i === this.ribbonTab })} @click=${() => (this.ribbonTab = i)}>${t}</button>`)}
          <button class="fold" aria-label="Collapse ribbon"><svg viewBox="0 0 12 9"><path d="M6 1l5 4.500L9 8 6 5.200 3 8 1 5.500z" fill="#fff" stroke="#777784"/></svg></button>
        </nav>
      </header>

      <section class="ribbon">
        ${RIBBON.map((g) => html`<div class="group">
          <div class="items">
            ${g.items.map((b) => html`<button ?disabled=${b.off}>
              ${icon(b.icon, 32)}
              <span class="label">${b.text.map((t) => html`<span>${t}</span>`)}</span>
              ${b.menu ? caret : ""}
            </button>`)}
          </div>
          <div class="caption">${g.name}</div>
        </div>`)}
      </section>

      <main class="work">
        <aside class="nav">
          <div class="navhead">
            <h2>Navigation</h2>
            <button aria-label="Pin"><svg class="pin" viewBox="0 0 8 8"><path d="M2.500 0v4.500M5.500 0v4.500M0 5h8M2 .5h4M4 5v3" stroke="currentColor" fill="none" stroke-width="1.200"/></svg></button>
            <button aria-label="Close panel">${cross}</button>
          </div>
          <div class="section">CRM/Sales</div>
          <ul class="tree">
            ${TREE.map((n) => html`<li class=${classMap({ l2: n.level === 2, sel: n.text === "Contact List" })}>
              <span class="mark ${n.mark ?? ""}">${n.mark ? caret : ""}</span>${icon(n.icon)}<button>${n.text}</button>
            </li>`)}
          </ul>
          <div class="split"></div>
          <div class="modules">
            ${MODULES.map(([art, text]) => html`<button class=${classMap({ on: text === this.module })} @click=${() => (this.module = text)}>${icon(art)}<span>${text}</span></button>`)}
          </div>
          <div class="tools">
            ${TOOLS.map(([art, text]) => html`<button aria-label=${text}>${icon(art)}</button>`)}
            <button class="last" aria-label="More">${caret}</button>
          </div>
        </aside>

        <section class="doc">
          <div class="docbar">
            <div class="doctab">${icon("person")}<span class="name">Winters, Edward W - Contact</span><button aria-label="Close tab">${cross}</button></div>
            ${caret}
          </div>
          <div class="sheet">
            <div class="top">
              <section class="card">
                <h3>${icon("person")}Contact</h3>
                <div class="form">
                  ${FIELDS.map((f, i) => this.field(f, i))}
                  <label for="inactive">Inactive:</label>
                  <input id="inactive" class="check" type="checkbox">
                </div>
              </section>
              <div class="grip"></div>
              <section class="tabset info">
                ${this.strip(INFO_TABS, this.infoTab, (i) => (this.infoTab = i))}
                <div class="pane">
                  <div class="tabset">
                    ${this.strip(SUB_TABS, this.subTab, (i) => (this.subTab = i), html`<span class="stub"></span><span class="grow"></span><span class="scroll">
                      <svg viewBox="0 0 5 9"><path d="M5 0v9L0 4.500z" fill="currentColor"/></svg><svg viewBox="0 0 5 9"><path d="M0 0v9l5-4.500z" fill="currentColor"/></svg></span>`)}
                    <div class="pane">
                      <div class="addr">
                        <label for="parent">Use Parent Addresses:</label>
                        <input id="parent" class="check" type="checkbox" checked>
                        ${ADDRESSES.map(([label, value], i) => html`<label for="a${i}">${label}</label>
                          <div class="box"><input id="a${i}" type="text" readonly .value=${value}>
                            <button class="dots" aria-label="Edit address"><svg viewBox="0 0 10 2"><path d="M0 0h2v2H0zM4 0h2v2H4zM8 0h2v2H8z" fill="currentColor"/></svg></button></div>`)}
                      </div>
                    </div>
                  </div>
                </div>
              </section>
            </div>

            <section class="tabset links">
              ${this.strip(LINK_TABS, this.linkTab, (i) => (this.linkTab = i))}
              <div class="pane">
                <div class="grid">
                  <table>
                    <colgroup>${[0, 1, 2, 3, 4, 5, 6, 7, 8, 9].map((c) => html`<col class="c${c}">`)}</colgroup>
                    <thead><tr><th></th>${COLUMNS.map((c) => html`<th>${c === "Event Subcategory" ? html`<span class="sort">${c}${caret}</span>` : c}</th>`)}</tr></thead>
                    <tbody>
                      ${ROWS.map((r, i) => html`<tr class=${classMap({ cur: i === 0 })}><td class="head0">${i === 0 ? html`<svg viewBox="0 0 4 7"><path d="M0 0v7l4-3.500z" fill="currentColor"/></svg>` : ""}</td>${r.map((v, c) => this.cell(v, c))}</tr>`)}
                    </tbody>
                  </table>
                  <div class="foot"><output>2</output></div>
                </div>
              </div>
            </section>
          </div>
        </section>
      </main>

      <footer class="status">
        ${STATUS.map((s) => html`<span>${s}</span>`)}
        <svg viewBox="0 0 11 11"><path d="M1 10.500l9.500-9.500M5 10.500L10.500 5M9 10.500l1.500-1.500" stroke="#8c8c98" fill="none"/></svg>
      </footer>
    `;
  }
}
